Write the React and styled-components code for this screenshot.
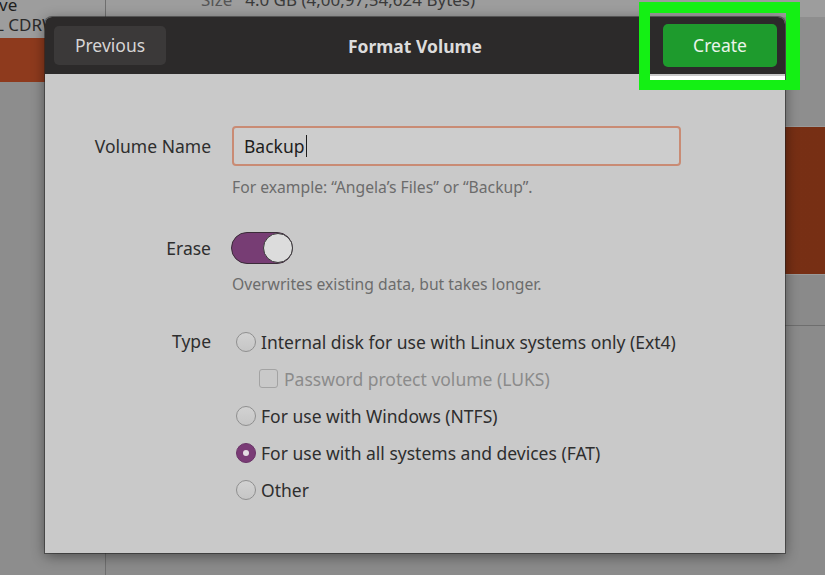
import React from "react";
import styled, { createGlobalStyle } from "styled-components";

const Global = createGlobalStyle`
  html, body { margin: 0; padding: 0; }
  body {
    font-family: "Noto Sans", "Open Sans", sans-serif;
    background: #8c8c8c;
  }
`;

const Page = styled.div`
  position: relative;
  width: 825px;
  height: 575px;
  overflow: hidden;
  display: flex;
  background: #8b8b8b;
`;

const Sidebar = styled.div`
  width: 105px;
  flex: none;
  border-right: 1px solid #6f6f6f;
  display: flex;
  flex-direction: column;
  background: #8d8d8d;
`;

const SideText = styled.div`
  background: #9d9d9d;
  height: 38px;
  box-sizing: border-box;
  overflow: hidden;
  white-space: nowrap;
  color: #1e1e1e;
  display: flex;
  flex-direction: column;
  gap: 5px;
`;

const SideLine = styled.div`
  margin-left: ${(p) => p.$shift}px;
  margin-top: ${(p) => p.$mt}px;
  font-size: 17px;
  line-height: 15px;
  height: 15px;
  color: ${(p) => p.$color};
`;

const SideSelected = styled.div`
  height: 44px;
  background: #8e3a1d;
`;

const Main = styled.div`
  flex: 1;
  display: flex;
  flex-direction: column;
`;

const MainTop = styled.div`
  height: 126px;
  background: #8e8e8e;
  overflow: hidden;
`;

const SizeLine = styled.div`
  background: #9d9d9d;
  height: 17px;
  display: flex;
  gap: 4px;
  padding-left: 95px;
  font-size: 17px;
  line-height: 0px;
  color: #3a3a3a;
  white-space: nowrap;
  overflow: hidden;
`;

const SizeKey = styled.span`
  color: #555;
`;

const OrangeBand = styled.div`
  height: 147px;
  background: linear-gradient(90deg, #6a2a12, #7a3016 30%, #772f14);
  border-top: 1px solid #9a9a9a;
  border-bottom: 1px solid #9a9a9a;
`;

const MainRest = styled.div`
  height: 50px;
  background: #8a8a8a;
  border-bottom: 1px solid #6e6e6e;
`;

const MainFill = styled.div`
  flex: 1;
  background: #8b8b8b;
`;

const Dialog = styled.div`
  position: absolute;
  left: 45px;
  top: 17px;
  width: 740px;
  height: 536px;
  display: flex;
  flex-direction: column;
  background: #c9c9c9;
  border-radius: 7px 7px 0 0;
  box-shadow: 0 3px 14px rgba(0, 0, 0, 0.45), 0 0 0 1px rgba(40, 40, 40, 0.5);
`;

const Header = styled.div`
  height: 57px;
  flex: none;
  background: #2c2a2a;
  border-radius: 7px 7px 0 0;
  display: flex;
  align-items: center;
  justify-content: space-between;
  padding: 0 8px 0 9px;
  position: relative;
`;

const HeaderButton = styled.button`
  height: ${(p) => (p.$primary ? 43 : 39)}px;
  width: ${(p) => (p.$primary ? 114 : 112)}px;
  border: none;
  border-radius: 5px;
  background: ${(p) => (p.$primary ? "#1e9b2d" : "#3b3939")};
  color: ${(p) => (p.$primary ? "#eaf4ea" : "#d6d4d4")};
  font-family: "Noto Sans", sans-serif;
  font-size: 17.5px;
  padding: 0 0 2px;
  cursor: default;
`;

const Title = styled.div`
  position: absolute;
  left: 0;
  right: 0;
  text-align: center;
  font-size: 17.5px;
  font-weight: 700;
  color: #dcdcdc;
  pointer-events: none;
`;

const Body = styled.div`
  flex: 1;
  padding-top: 52px;
`;

const Form = styled.div`
  display: grid;
  grid-template-columns: 166px 1fr;
  column-gap: 20px;
  align-items: center;
`;

const Label = styled.div`
  text-align: right;
  font-size: 17.5px;
  color: #2e2e2e;
  align-self: ${(p) => (p.$top ? "start" : "center")};
  line-height: ${(p) => (p.$top ? "37px" : "normal")};
  margin-top: ${(p) => p.$mt || 0}px;
`;

const Cell = styled.div`
  grid-column: 2;
  margin-top: ${(p) => p.$mt || 0}px;
`;

const Input = styled.div`
  width: 449px;
  height: 40px;
  box-sizing: border-box;
  border: 2px solid #c98b74;
  border-radius: 4px;
  background: #cdcdcd;
  display: flex;
  align-items: center;
  padding-left: 10px;
  font-size: 17.5px;
  color: #1d1d1d;
  margin-left: 1px;
`;

const Caret = styled.span`
  display: inline-block;
  width: 1px;
  height: 22px;
  background: #1d1d1d;
  margin-left: 1px;
`;

const Hint = styled.div`
  font-size: 15.7px;
  line-height: 20px;
  color: #6c6c6c;
  margin-top: ${(p) => p.$mt || 0}px;
  margin-left: 1px;
`;

const Switch = styled.div`
  width: 62px;
  height: 32px;
  box-sizing: border-box;
  border-radius: 16px;
  background: #773d74;
  border: 1px solid #3b2b39;
  display: flex;
  justify-content: flex-end;
  align-items: center;
`;

const Knob = styled.div`
  width: 30px;
  height: 30px;
  box-sizing: border-box;
  border-radius: 50%;
  background: #dcdcdc;
  border: 1px solid #3b3b3b;
  margin-right: -1px;
`;

const Options = styled.div`
  display: flex;
  flex-direction: column;
`;

const Option = styled.div`
  height: 37px;
  display: flex;
  align-items: center;
  gap: ${(p) => (p.$check ? 6 : 5)}px;
  padding-left: ${(p) => (p.$check ? 28 : 5)}px;
  font-size: 17.5px;
  color: ${(p) => (p.$disabled ? "#8b8b8b" : "#2e2e2e")};
`;

const Radio = styled.span`
  width: 20px;
  height: 20px;
  box-sizing: border-box;
  border-radius: 50%;
  flex: none;
  border: 1px solid ${(p) => (p.$on ? "#6a3367" : "#8f8f8f")};
  background: ${(p) => (p.$on ? "#7a3b76" : "linear-gradient(#d2d2d2, #c6c6c6)")};
  display: flex;
  align-items: center;
  justify-content: center;
  &::after {
    content: "";
    display: ${(p) => (p.$on ? "block" : "none")};
    width: 6px;
    height: 6px;
    border-radius: 50%;
    background: #e4dce3;
  }
`;

const Check = styled.span`
  width: 19px;
  height: 19px;
  box-sizing: border-box;
  border-radius: 3px;
  flex: none;
  border: 1px solid #a3a3a3;
  background: #c9c9c9;
`;

const Highlight = styled.div`
  position: absolute;
  left: 639px;
  top: 2px;
  width: 161px;
  height: 88px;
  box-sizing: border-box;
  border-style: solid;
  border-color: #14f014;
  border-width: 11px 14px 10px 11px;
`;

const WhiteMark = styled.div`
  position: absolute;
  left: 650px;
  top: 76px;
  width: 135px;
  height: 4px;
  background: #ffffff;
`;

export default function App() {
  return (
    <>
      <Global />
      <Page>
        <Sidebar>
          <SideText>
            <SideLine $shift={-1} $mt={-3} $color="#1e1e1e">ve</SideLine>
            <SideLine $shift={-5} $mt={0} $color="#2a2a2a">L CDRW</SideLine>
          </SideText>
          <SideSelected />
        </Sidebar>
        <Main>
          <MainTop>
            <SizeLine>
              <SizeKey>Size</SizeKey>
              <span>&nbsp;&nbsp;4.0 GB (4,00,97,54,624 Bytes)</span>
            </SizeLine>
          </MainTop>
          <OrangeBand />
          <MainRest />
          <MainFill />
        </Main>

        <Dialog>
          <Header>
            <HeaderButton>Previous</HeaderButton>
            <Title>Format Volume</Title>
            <HeaderButton $primary>Create</HeaderButton>
          </Header>
          <Body>
            <Form>
              <Label>Volume Name</Label>
              <Cell>
                <Input>
                  Backup<Caret />
                </Input>
              </Cell>
              <Cell>
                <Hint $mt={11}>For example: “Angela’s Files” or “Backup”.</Hint>
              </Cell>

              <Label $mt={35}>Erase</Label>
              <Cell $mt={35}>
                <Switch>
                  <Knob />
                </Switch>
              </Cell>
              <Cell>
                <Hint $mt={10}>Overwrites existing data, but takes longer.</Hint>
              </Cell>

              <Label $top $mt={29}>Type</Label>
              <Cell $mt={29}>
                <Options>
                  <Option>
                    <Radio />
                    Internal disk for use with Linux systems only (Ext4)
                  </Option>
                  <Option $check $disabled>
                    <Check />
                    Password protect volume (LUKS)
                  </Option>
                  <Option>
                    <Radio />
                    For use with Windows (NTFS)
                  </Option>
                  <Option>
                    <Radio $on />
                    For use with all systems and devices (FAT)
                  </Option>
                  <Option>
                    <Radio />
                    Other
                  </Option>
                </Options>
              </Cell>
            </Form>
          </Body>
        </Dialog>

        <Highlight />
        <WhiteMark />
      </Page>
    </>
  );
}
